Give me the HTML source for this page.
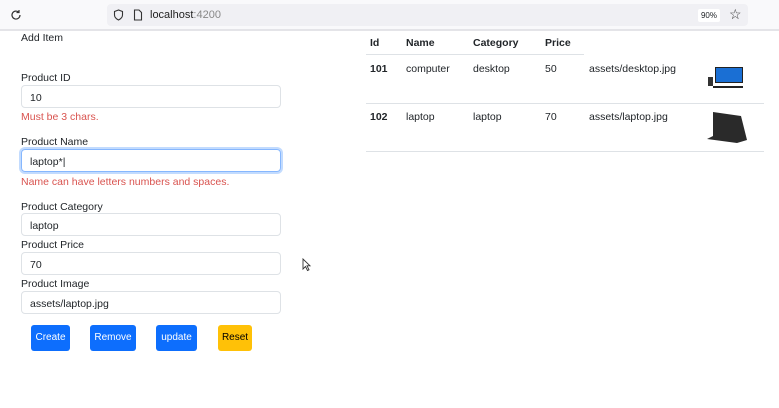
<!DOCTYPE html>
<html><head><style>
body{margin:0;width:779px;height:408px;background:#fff;font-family:"Liberation Sans",sans-serif;font-size:10.5px;color:#212529;position:relative;overflow:hidden}
.a{position:absolute;white-space:nowrap}
.inp{position:absolute;left:21px;width:258px;height:21px;border:1px solid #dee2e6;border-radius:4px;box-sizing:content-box;}
.inp span{position:absolute;left:8px;top:6px}
.err{color:#d9534f}
.btn{position:absolute;top:325px;height:26px;border-radius:3px;background:#0d6efd;color:#fff;text-align:center;line-height:26px;font-size:10px}
.th{font-weight:bold}
</style></head><body>
<div class="a" style="left:0;top:0;width:779px;height:29px;background:#f9f9fb;border-bottom:2px solid #e4e4e8"></div>
<div class="a" style="left:107px;top:4px;width:641px;height:22px;background:#f0f0f4;border-radius:4px"></div>
<svg class="a" style="left:10px;top:9px" width="12" height="12" viewBox="0 0 12 12"><path d="M10 6a4 4 0 1 1-1.2-2.8M9 1v2.5H6.5" fill="none" stroke="#333" stroke-width="1.2"/></svg>
<svg class="a" style="left:113px;top:9px" width="11" height="12" viewBox="0 0 11 12"><path d="M5.5 1L1.5 2.5v3.5c0 2.5 2 4 4 5 2-1 4-2.5 4-5V2.5z" fill="none" stroke="#333" stroke-width="1.1"/></svg>
<svg class="a" style="left:133px;top:9px" width="10" height="12" viewBox="0 0 10 12"><path d="M1.5 1h4.5l2.5 2.5v7.5h-7z" fill="none" stroke="#333" stroke-width="1.1"/></svg>
<div class="a" style="left:150px;top:9px;font-size:11px;color:#222">localhost<span style="color:#888">:4200</span></div>
<div class="a" style="left:698px;top:9px;width:22px;height:13px;background:#fff;font-size:8px;text-align:center;line-height:13px;border-radius:2px">90%</div>
<div class="a" style="left:729px;top:6px;font-size:14px;color:#333">☆</div>

<div class="a" style="left:21px;top:32px">Add Item</div>
<div class="a" style="left:21px;top:72px">Product ID</div>
<div class="inp" style="top:85px"><span>10</span></div>
<div class="a err" style="left:21px;top:111px">Must be 3 chars.</div>
<div class="a" style="left:21px;top:136px">Product Name</div>
<div class="inp" style="top:149px;border-color:#86b7fe;box-shadow:0 0 0 2px #c2dbfe"><span>laptop*|</span></div>
<div class="a err" style="left:21px;top:176px">Name can have letters numbers and spaces.</div>
<div class="a" style="left:21px;top:201px">Product Category</div>
<div class="inp" style="top:213px"><span>laptop</span></div>
<div class="a" style="left:21px;top:239px">Product Price</div>
<div class="inp" style="top:252px"><span>70</span></div>
<div class="a" style="left:21px;top:278px">Product Image</div>
<div class="inp" style="top:291px"><span>assets/laptop.jpg</span></div>
<div class="btn" style="left:31px;width:39px">Create</div>
<div class="btn" style="left:90px;width:46px">Remove</div>
<div class="btn" style="left:156px;width:41px">update</div>
<div class="btn" style="left:218px;width:34px;background:#ffc107;color:#000">Reset</div>
<svg class="a" style="left:302px;top:258px" width="10" height="14" viewBox="0 0 10 14"><path d="M1 1v10l2.5-2.5 2 4 1.5-.7-2-4H8z" fill="#fff" stroke="#333" stroke-width=".9"/></svg>

<div class="a th" style="left:370px;top:37px">Id</div>
<div class="a th" style="left:406px;top:37px">Name</div>
<div class="a th" style="left:473px;top:37px">Category</div>
<div class="a th" style="left:545px;top:37px">Price</div>
<div class="a" style="left:366px;top:54px;width:218px;height:1px;background:#dee2e6"></div>
<div class="a th" style="left:370px;top:63px">101</div>
<div class="a" style="left:406px;top:63px">computer</div>
<div class="a" style="left:473px;top:63px">desktop</div>
<div class="a" style="left:545px;top:63px">50</div>
<div class="a" style="left:589px;top:63px">assets/desktop.jpg</div>
<div class="a" style="left:715px;top:67px;width:26px;height:14px;background:#1a6fd4;border:1px solid #222"></div>
<div class="a" style="left:708px;top:77px;width:5px;height:9px;background:#333"></div>
<div class="a" style="left:713px;top:86px;width:30px;height:2px;background:#222"></div>
<div class="a" style="left:366px;top:103px;width:398px;height:1px;background:#dee2e6"></div>
<div class="a th" style="left:370px;top:111px">102</div>
<div class="a" style="left:406px;top:111px">laptop</div>
<div class="a" style="left:473px;top:111px">laptop</div>
<div class="a" style="left:545px;top:111px">70</div>
<div class="a" style="left:589px;top:111px">assets/laptop.jpg</div>
<svg class="a" style="left:705px;top:110px" width="42" height="34" viewBox="0 0 42 34"><path d="M8 2l28 4 6 24-10 3L2 29l6-3z" fill="#2a2a2a"/></svg>
<div class="a" style="left:366px;top:151px;width:398px;height:1px;background:#dee2e6"></div>
</body></html>
